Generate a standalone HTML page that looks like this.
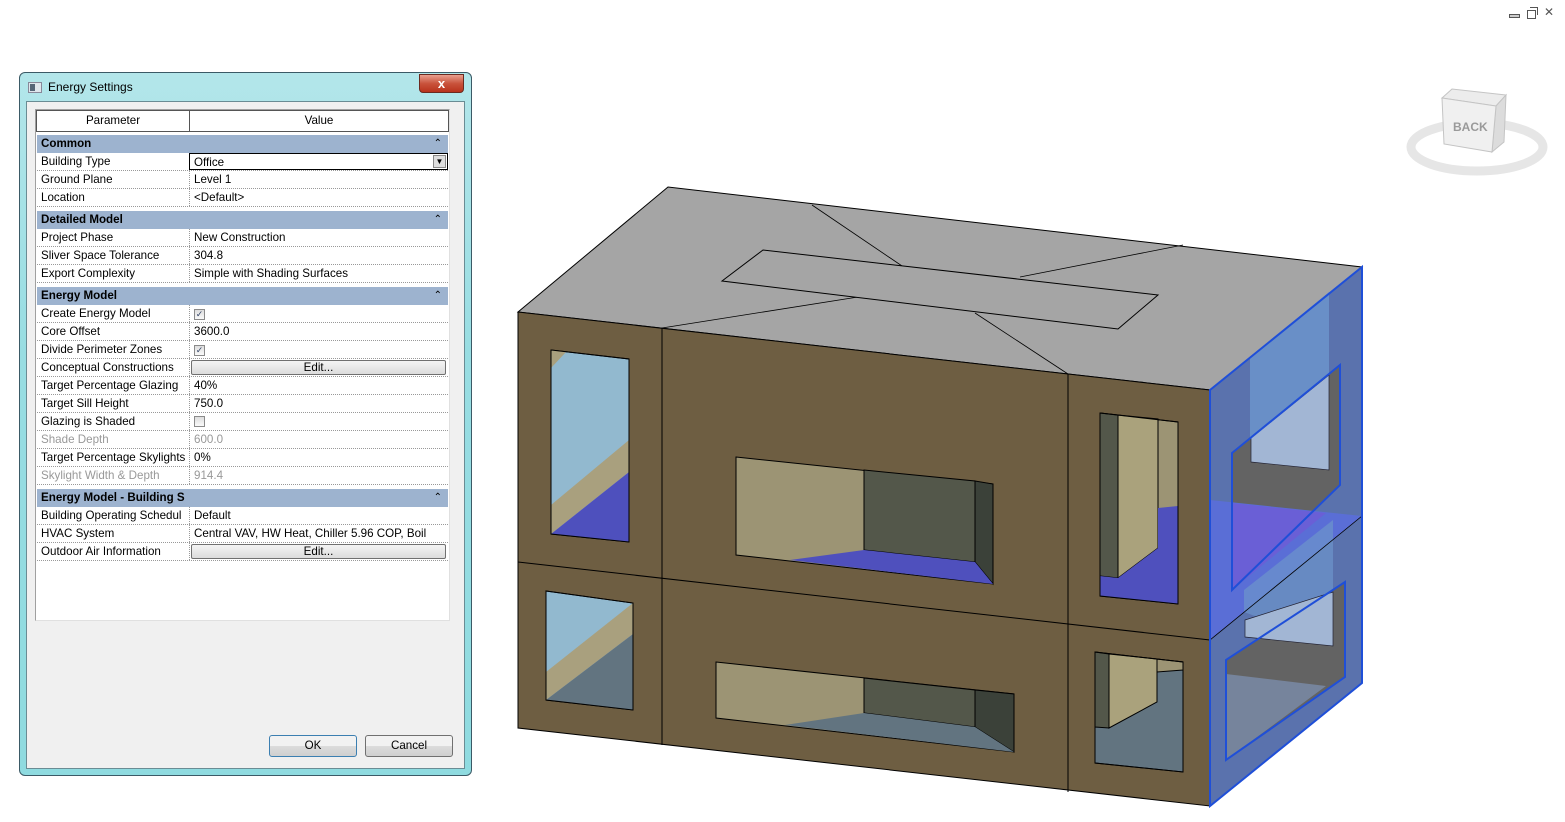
<!DOCTYPE html>
<html><head><meta charset="utf-8"><style>
*{margin:0;padding:0;box-sizing:border-box}
body{width:1565px;height:822px;background:#fff;position:relative;overflow:hidden;font-family:"Liberation Sans",sans-serif;font-size:11.6px;color:#000}
.dlg{position:absolute;left:19px;top:72px;width:453px;height:704px;border:1px solid #3b5a66;border-radius:6px;background:linear-gradient(#b3e6ea,#98dde2 40%,#8fdbe0);}
.ttl{position:absolute;left:28px;top:7px;font-size:12px;color:#000}
.ico{position:absolute;left:8px;top:9px;width:14px;height:11px;background:#dfe6ec;border:1px solid #889}
.ico:before{content:"";position:absolute;left:1px;top:1px;width:5px;height:7px;background:#567}
.xb{position:absolute;left:399px;top:1px;width:45px;height:19px;border:1px solid #6b2a20;border-radius:0 0 4px 4px;background:linear-gradient(#e9a08f,#c9533c 50%,#b8321c);color:#fff;font-weight:bold;text-align:center;font-size:13px;line-height:17px}
.client{position:absolute;left:6px;top:28px;width:439px;height:668px;background:#f0f0f0;border:1px solid #6a8c94}
.grid{position:absolute;left:8px;top:7px;width:415px;height:512px;background:#fff;border:1px solid #a0a0a0;border-right-color:#e0e0e0;border-bottom-color:#e0e0e0}
.row{position:absolute;left:1px;width:411px;height:18px;border-bottom:1px dotted #999;line-height:17px}
.row .p{position:absolute;left:4px;white-space:nowrap;overflow:hidden;width:148px}
.row .v{position:absolute;left:152px;top:0;height:17px;width:259px;border-left:1px dotted #999;padding-left:4px;white-space:nowrap;overflow:hidden}
.sec{position:absolute;left:1px;width:411px;height:18px;background:#9db3cf;font-weight:bold;line-height:17px;padding-left:4px}
.sec:after{content:"\2303";position:absolute;right:6px;top:0;font-weight:normal;font-size:10px}
.g{color:#999}
.hdr{position:absolute;top:0;height:22px;border:1px solid #555;text-align:center;line-height:20px;background:#fff}
.cb{display:inline-block;width:11px;height:11px;border:1px solid #8a8a8a;background:linear-gradient(#ddd,#fafafa);margin-top:3px;font-size:9px;line-height:9px;text-align:center;color:#346}
.eb{position:absolute;left:1px;top:1px;width:255px;height:15px;border:1px solid #707070;border-radius:2px;background:linear-gradient(#f4f4f4,#dcdcdc);text-align:center;line-height:13px}
.btn{position:absolute;top:633px;width:88px;height:22px;border:1px solid #707070;border-radius:3px;background:linear-gradient(#f2f2f2 50%,#dcdcdc 51%,#cfcfcf);text-align:center;line-height:20px}
</style></head><body>

<div style="position:absolute;left:1509px;top:14px;width:11px;height:4px;border:1px solid #555;background:#ccc"></div>
<div style="position:absolute;left:1527px;top:10px;width:9px;height:9px;border:1px solid #555"></div>
<div style="position:absolute;left:1530px;top:7px;width:8px;height:8px;border:1px solid #555;border-left:none;border-bottom:none"></div>
<div style="position:absolute;left:1544px;top:5px;font-size:12px;color:#555">✕</div>

<svg style="position:absolute;left:1400px;top:80px" width="160" height="100">
<ellipse cx="77" cy="67" rx="66" ry="24" fill="none" stroke="#e6e6e6" stroke-width="9"/>
<polygon points="42,18 52,9 106,15 96,26" fill="#ececec" stroke="#c4c4c4"/>
<polygon points="96,26 106,15 104,62 92,72" fill="#dcdcdc" stroke="#c4c4c4"/>
<polygon points="42,18 96,26 92,72 44,64" fill="#f0f0f0" stroke="#c4c4c4"/>
<text x="53" y="51" font-family="Liberation Sans" font-size="12" font-weight="bold" fill="#9a9a9a">BACK</text>
</svg>

<svg style="position:absolute;left:0;top:0" width="1565" height="822">
<g stroke="#000" stroke-width="1">
<polygon points="518,312 668,187 1362,267 1210,390" fill="#a5a5a5"/>
<polyline points="812,205 905,268" fill="none" stroke-width="0.8"/>
<polyline points="975,313 1068,374" fill="none" stroke-width="0.8"/>
<polyline points="662,328 858,297" fill="none" stroke-width="0.8"/>
<polyline points="1020,277 1183,245" fill="none" stroke-width="0.8"/>
<polygon points="722,281 763,250 1158,295 1118,329" fill="#a5a5a5"/>
<polygon points="518,312 1210,390 1210,806 518,728" fill="#6e5e42"/>
<line x1="662" y1="328" x2="662" y2="745"/>
<line x1="1068" y1="374" x2="1068" y2="792"/>
<line x1="518" y1="562" x2="1210" y2="640"/>
<!-- left top window -->
<polygon points="551,350 629,359 629,542 551,534" fill="#92b9cf"/>
<polygon points="551,350 566,352 551,368" fill="#a9a07e" stroke="none"/>
<polygon points="551,505 629,440 629,472 551,534" fill="#a9a07e" stroke="none"/>
<polygon points="551,534 629,472 629,542" fill="#4e50bd" stroke="none"/>
<polygon points="551,350 629,359 629,542 551,534" fill="none"/>
<!-- left bottom -->
<polygon points="546,591 633,603 633,710 546,700" fill="#92b9cf"/>
<polygon points="546,672 633,603 633,634 546,700" fill="#a9a07e" stroke="none"/>
<polygon points="546,700 633,634 633,710" fill="#627480" stroke="none"/>
<polygon points="546,591 633,603 633,710 546,700" fill="none"/>
<!-- mid top -->
<polygon points="736,457 993,484 993,584 736,555" fill="#9c9474"/>
<polygon points="864,470 975,481 975,562 864,550" fill="#53574a"/>
<polygon points="975,481 993,484 993,584 975,562" fill="#3b4139"/>
<polygon points="790,560 864,550 975,562 993,584" fill="#4f50bd" stroke="none"/>
<!-- mid bottom -->
<polygon points="716,662 1014,694 1014,752 716,718" fill="#9c9474"/>
<polygon points="864,678 975,690 975,727 864,713" fill="#53574a"/>
<polygon points="975,690 1014,694 1014,752 975,727" fill="#3b4139"/>
<polygon points="785,725 864,713 975,727 1014,752" fill="#627480" stroke="none"/>
<!-- right top -->
<polygon points="1100,413 1178,422 1178,604 1100,596" fill="#9c9474"/>
<polygon points="1100,413 1118,415 1118,578 1100,576" fill="#53574a"/>
<polygon points="1118,415 1158,419 1158,548 1118,578" fill="#aaa27c"/>
<polygon points="1100,576 1118,578 1158,548 1158,508 1178,506 1178,604 1100,596" fill="#4f50bd" stroke="none"/>
<polygon points="1100,413 1178,422 1178,604 1100,596" fill="none"/>
<!-- right bottom -->
<polygon points="1095,652 1183,662 1183,772 1095,763" fill="#627480"/>
<polygon points="1095,652 1109,654 1109,728 1095,727" fill="#53574a"/>
<polygon points="1109,654 1157,659 1157,702 1109,728" fill="#aaa27c"/>
<polygon points="1157,659 1183,662 1183,670 1157,672" fill="#9c9474"/>
<polygon points="1095,652 1183,662 1183,772 1095,763" fill="none"/>
</g>
<!-- right face -->
<polygon points="1210,390 1362,267 1362,683 1210,806" fill="#5a72ad"/>
<polygon points="1250,357 1329,292 1329,470 1250,462" fill="#6c94cb" opacity="0.85"/>
<polygon points="1232,453 1340,365 1340,485 1232,590" fill="#636363"/>
<polygon points="1251,438 1329,375 1329,470 1251,462" fill="#a2b6d4" stroke="#223" stroke-width="0.7"/>
<polygon points="1210,500 1362,516 1210,640" fill="#5a6ed6"/>
<polygon points="1232,503 1326,513 1232,590" fill="#6a5fd6"/>
<polygon points="1232,453 1340,365 1340,485 1232,590" fill="none" stroke="#1f4fd8" stroke-width="2"/>
<polygon points="1244,590 1333,520 1333,645 1244,612" fill="#6c94cb" opacity="0.7"/>
<polygon points="1226,660 1345,582 1345,677 1226,760" fill="#636363"/>
<polygon points="1245,620 1333,592 1333,646 1245,637" fill="#a2b6d4" stroke="#223" stroke-width="0.7"/>
<polygon points="1226,674 1326,686 1226,760" fill="#76849c"/>
<polygon points="1226,660 1345,582 1345,677 1226,760" fill="none" stroke="#1f4fd8" stroke-width="2"/>
<line x1="1210" y1="640" x2="1362" y2="516" stroke="#000" stroke-width="0.8"/>
<polygon points="1210,390 1362,267 1362,683 1210,806" fill="none" stroke="#1f4fd8" stroke-width="2"/>
</svg>

<div class="dlg">
<div class="ico"></div><div class="ttl">Energy Settings</div>
<div class="xb">x</div>
<div class="client">
<div class="grid">
<div class="hdr" style="left:0;width:154px">Parameter</div>
<div class="hdr" style="left:153px;width:260px">Value</div>
<div class="sec" style="top:25px">Common</div>
<div class="row" style="top:43px"><span class="p">Building Type</span><span class="v" style="border:1px solid #000;height:17px">Office<span style="position:absolute;right:1px;top:1px;width:13px;height:13px;background:#ddd;border:1px solid #888;font-size:8px;text-align:center;line-height:12px">▼</span></span></div>
<div class="row" style="top:61px"><span class="p">Ground Plane</span><span class="v">Level 1</span></div>
<div class="row" style="top:79px"><span class="p">Location</span><span class="v">&lt;Default&gt;</span></div>
<div class="sec" style="top:101px">Detailed Model</div>
<div class="row" style="top:119px"><span class="p">Project Phase</span><span class="v">New Construction</span></div>
<div class="row" style="top:137px"><span class="p">Sliver Space Tolerance</span><span class="v">304.8</span></div>
<div class="row" style="top:155px"><span class="p">Export Complexity</span><span class="v">Simple with Shading Surfaces</span></div>
<div class="sec" style="top:177px">Energy Model</div>
<div class="row" style="top:195px"><span class="p">Create Energy Model</span><span class="v"><span class="cb">✓</span></span></div>
<div class="row" style="top:213px"><span class="p">Core Offset</span><span class="v">3600.0</span></div>
<div class="row" style="top:231px"><span class="p">Divide Perimeter Zones</span><span class="v"><span class="cb">✓</span></span></div>
<div class="row" style="top:249px"><span class="p">Conceptual Constructions</span><span class="v"><span class="eb">Edit...</span></span></div>
<div class="row" style="top:267px"><span class="p">Target Percentage Glazing</span><span class="v">40%</span></div>
<div class="row" style="top:285px"><span class="p">Target Sill Height</span><span class="v">750.0</span></div>
<div class="row" style="top:303px"><span class="p">Glazing is Shaded</span><span class="v"><span class="cb"></span></span></div>
<div class="row g" style="top:321px"><span class="p">Shade Depth</span><span class="v">600.0</span></div>
<div class="row" style="top:339px"><span class="p">Target Percentage Skylights</span><span class="v">0%</span></div>
<div class="row g" style="top:357px"><span class="p">Skylight Width &amp; Depth</span><span class="v">914.4</span></div>
<div class="sec" style="top:379px">Energy Model - Building S</div>
<div class="row" style="top:397px"><span class="p">Building Operating Schedul</span><span class="v">Default</span></div>
<div class="row" style="top:415px"><span class="p">HVAC System</span><span class="v">Central VAV, HW Heat, Chiller 5.96 COP, Boil</span></div>
<div class="row" style="top:433px"><span class="p">Outdoor Air Information</span><span class="v"><span class="eb">Edit...</span></span></div>
</div>
<div class="btn" style="left:242px;border-color:#3c7fb1">OK</div>
<div class="btn" style="left:338px">Cancel</div>
</div>
</div>
</body></html>
